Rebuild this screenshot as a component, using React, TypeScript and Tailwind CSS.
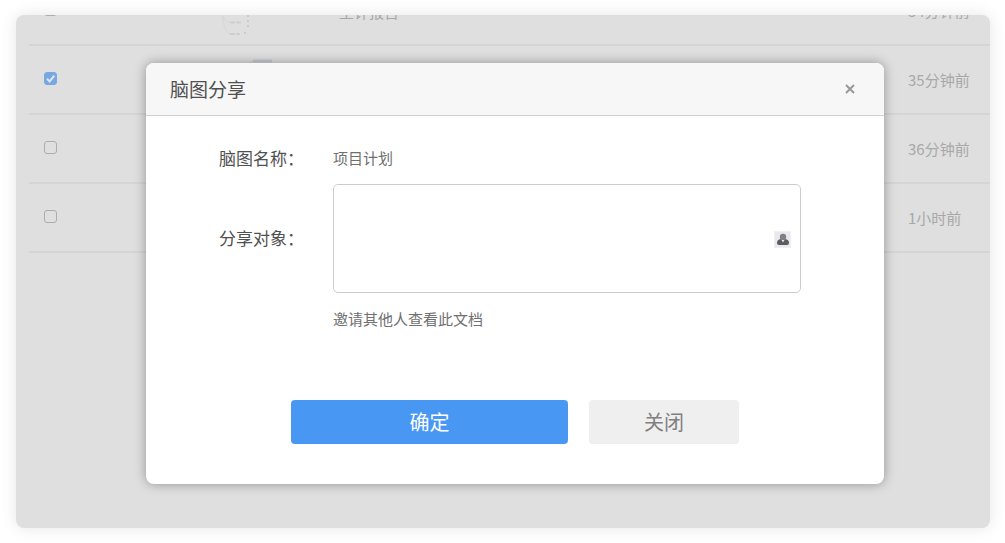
import React from "react";

type Row = { id: string; name: string; time: string; checked: boolean; thumb?: "tree" | "bar" };

const rows: Row[] = [
  { id: "a", name: "主计报告", time: "34分钟前", checked: false, thumb: "tree" },
  { id: "b", name: "", time: "35分钟前", checked: true, thumb: "bar" },
  { id: "c", name: "", time: "36分钟前", checked: false },
  { id: "d", name: "", time: "1小时前", checked: false },
];

function TreeThumb() {
  return (
    <svg width="30" height="32" viewBox="0 0 30 32" fill="none" aria-hidden="true">
      <path d="M0 0C1 12 3 21 9 22M1 4Q3 10 8 10.500" stroke="#d6d6d6" />
      <path d="M8 10.500h12M8 22h10" stroke="#cbcfd2" strokeWidth="2" strokeDasharray="5 1" />
      <path d="M26 3v14M23 20v5" stroke="#c8ccd0" strokeWidth="2" strokeDasharray="2 3" />
    </svg>
  );
}

function BarThumb() {
  return (
    <svg width="60" height="54" viewBox="0 0 60 54" fill="none" aria-hidden="true">
      <path d="M31 2h19" stroke="#c6cacd" strokeWidth="3" />
      <path d="M31 2Q26 3 22 14" stroke="#d2d2d2" />
    </svg>
  );
}

function FileRow({ row }: { row: Row }) {
  return (
    <li className="flex h-[69px] items-center border-b-2 border-[#d5d5d5]">
      <div className="flex w-[193px] pb-0.5 pl-[15px]">
        <input
          type="checkbox"
          aria-label={row.name || row.time}
          defaultChecked={row.checked}
          className="peer size-[13px] appearance-none rounded-[3px] border border-[#adadad] checked:border-[#76a9e4] checked:bg-[#76a9e4]"
        />
        <svg
          viewBox="0 0 13 13"
          className="pointer-events-none -ml-[13px] hidden size-[13px] peer-checked:block"
          aria-hidden="true"
        >
          <path d="M3 6.800l2.600 2.600L10.300 3.600" fill="none" stroke="#e3e5e8" strokeWidth="2" />
        </svg>
      </div>
      <div className="flex w-[117px] self-end">
        {row.thumb === "tree" && <TreeThumb />}
        {row.thumb === "bar" && <BarThumb />}
      </div>
      <span className="flex-1 pt-0.5 text-[15px] leading-5 text-[#a8a8a8]">{row.name}</span>
      <span className="w-[82px] text-[15px] leading-5 text-[#a8a8a8]">{row.time}</span>
    </li>
  );
}

function PersonIcon() {
  return (
    <svg width="17" height="17" viewBox="0 0 17 17" aria-hidden="true">
      <rect width="17" height="17" fill="#e9e9ed" />
      <rect x="0.5" y="0.5" width="16" height="16" fill="none" stroke="#f0f0f2" />
      <path d="M3 12C3 9.500 4.500 8.500 6.500 8L9 10L11.500 8C13.500 8.500 15 9.500 15 12Q15 14 13 14H5Q3 14 3 12Z" fill="#5c5c5e" />
      <circle cx="9" cy="6" r="3.200" fill="#808082" />
      <path d="M7.500 9L9 11.500L10.500 9Z" fill="#e4e4e6" />
    </svg>
  );
}

function ShareDialog() {
  return (
    <section
      role="dialog"
      aria-labelledby="share-title"
      className="absolute top-[48px] right-[106px] left-[130px] overflow-hidden rounded-lg bg-white shadow-[0_0_12px_rgba(0,0,0,0.35)]"
    >
      <header className="flex h-[53px] items-center justify-between border-b border-[#d0d0d0] bg-[#f7f7f7] pr-7 pl-6">
        <h1 id="share-title" className="text-[19px] font-normal text-[#505050]">脑图分享</h1>
        <button type="button" aria-label="关闭窗口" className="flex size-3 items-center justify-center">
          <svg width="10" height="10" viewBox="0 0 10 10" aria-hidden="true">
            <path d="M1 1l8 8M9 1l-8 8" stroke="#999" strokeWidth="2" />
          </svg>
        </button>
      </header>
      <form className="pt-7 pb-10" onSubmit={(e) => e.preventDefault()}>
        <div className="grid grid-cols-[114px_1fr] items-center pr-[83px] pl-[73px]">
          <span className="text-[17px] leading-7 text-[#505050]">脑图名称：</span>
          <span className="text-[15px] leading-7 text-[#707070]">项目计划</span>
          <label htmlFor="targets" className="mt-2.5 text-[17px] leading-7 text-[#505050]">分享对象：</label>
          <div className="relative mt-3">
            <textarea
              id="targets"
              className="block h-[109px] w-full resize-none rounded-[5px] border border-[#ccc] bg-white p-2 pr-9 text-[15px] outline-none"
            />
            <button type="button" aria-label="选择成员" className="absolute top-[47px] right-2.5">
              <PersonIcon />
            </button>
          </div>
          <p className="col-start-2 mt-3 text-[15px] leading-7 text-[#707070]">邀请其他人查看此文档</p>
        </div>
        <div className="mt-[67px] flex justify-center gap-[21px] px-[145px] text-[20px]">
          <button type="submit" className="h-11 flex-[277] rounded bg-[#4897f3] text-white">确定</button>
          <button type="button" className="h-11 flex-[150] rounded bg-[#efefef] text-[#808080]">关闭</button>
        </div>
      </form>
    </section>
  );
}

export default function App() {
  return (
    <div className="flex min-h-screen bg-white p-[15px] pl-4 font-['Noto_Sans_CJK_SC',sans-serif]">
      <main className="relative flex-1 overflow-hidden rounded-lg bg-[#dfdfdf] shadow-[0_0_16px_rgba(0,0,0,0.1)]">
        <ul className="-mt-[38px] pl-[13px]">
          {rows.map((row) => (
            <FileRow key={row.id} row={row} />
          ))}
        </ul>
        <ShareDialog />
      </main>
    </div>
  );
}
